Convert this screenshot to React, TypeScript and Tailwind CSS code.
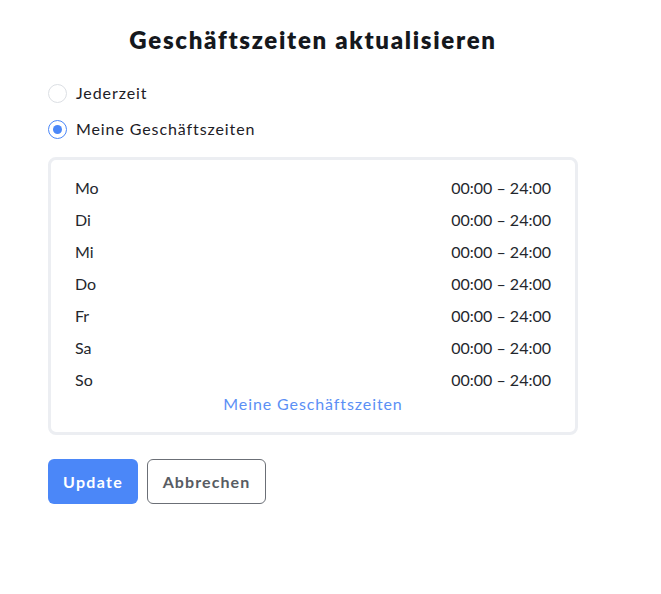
const days = ["Mo", "Di", "Mi", "Do", "Fr", "Sa", "So"];

function Radio({ checked, label }: { checked: boolean; label: string }) {
  return (
    <label className="flex items-center gap-[9px] h-6">
      <span
        className={`flex items-center justify-center w-[19px] h-[19px] rounded-full border ${
          checked ? "border-[#4b87f8]" : "border-[#dcdfe4]"
        }`}
      >
        {checked && <span className="w-[9px] h-[9px] rounded-full bg-[#4b87f8]" />}
      </span>
      <span className="text-[16px] tracking-[0.9px] text-[#1d2026]">{label}</span>
    </label>
  );
}

export default function App() {
  return (
    <div className="min-h-screen bg-white font-['Lato',sans-serif]">
      <div className="w-[530px] ml-[48px] pt-[24px]">
        <h1 className="text-center text-[24px] leading-8 font-extrabold text-[#15181d] tracking-[1.7px]">
          Geschäftszeiten aktualisieren
        </h1>

        <div className="mt-[25px] flex flex-col gap-3">
          <Radio checked={false} label="Jederzeit" />
          <Radio checked={true} label="Meine Geschäftszeiten" />
        </div>

        <div className="mt-4 border-[3px] border-[#eceef2] rounded-lg px-6 py-4">
          <div className="flex flex-col gap-2">
            {days.map((d) => (
              <div key={d} className="flex justify-between leading-6 text-[16px] text-[#24272d]">
                <span>{d}</span>
                <span>00:00 – 24:00</span>
              </div>
            ))}
          </div>
          <div className="text-center leading-6 text-[16px] tracking-[0.9px] text-[#5b8ff5]">
            Meine Geschäftszeiten
          </div>
        </div>

        <div className="mt-6 flex gap-[9px]">
          <button className="h-[45px] w-[90px] rounded-md bg-[#4b87f8] text-white font-bold text-[16px] tracking-[1.3px]">
            Update
          </button>
          <button className="h-[45px] w-[119px] rounded-md border border-[#6b6f76] text-[#585c63] font-bold text-[16px] tracking-[1.1px]">
            Abbrechen
          </button>
        </div>
      </div>
    </div>
  );
}
